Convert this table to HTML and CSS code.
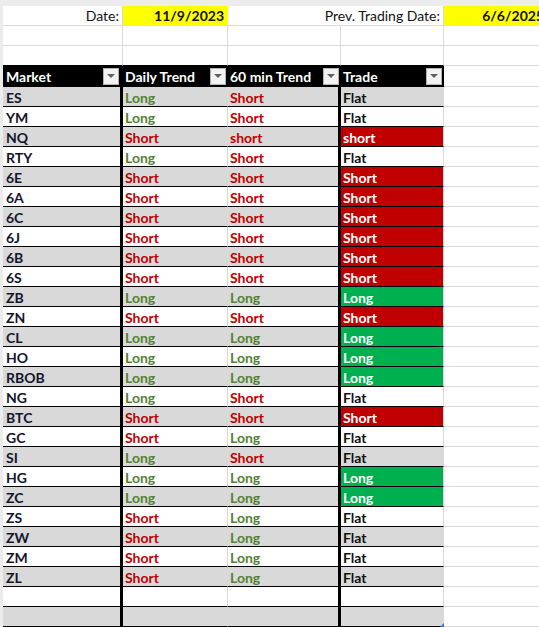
FILE: index.html
```html
<!DOCTYPE html>
<html>
<head>
<meta charset="utf-8">
<link rel="stylesheet" href="styles.css">
</head>
<body>
<div class="frame">
  <div class="sheet">
    <div class="row">
      <div class="c ra">Date:</div>
      <div class="c ra yellow b">11/9/2023</div>
      <div class="c nob"></div>
      <div class="c ra over">Prev. Trading Date:</div>
      <div class="c ra yellow b">6/6/2025</div>
    </div>
    <div class="row">
      <div class="c"></div><div class="c"></div><div class="c"></div><div class="c"></div><div class="c"></div>
    </div>
    <div class="row pre">
      <div class="c"></div><div class="c"></div><div class="c"></div><div class="c"></div><div class="c"></div>
    </div>
    <div class="row head">
      <div class="c h ta">Market<span class="filter"></span></div>
      <div class="c h">Daily Trend<span class="filter"></span></div>
      <div class="c h">60 min Trend<span class="filter"></span></div>
      <div class="c h">Trade<span class="filter"></span></div>
      <div class="c"></div>
    </div>
    <div class="row g"><div class="c t ta m">ES</div><div class="c t tb long">Long</div><div class="c t tc short">Short</div><div class="c t td">Flat</div><div class="c"></div></div>
    <div class="row"><div class="c t ta m">YM</div><div class="c t tb long">Long</div><div class="c t tc short">Short</div><div class="c t td">Flat</div><div class="c"></div></div>
    <div class="row g"><div class="c t ta m">NQ</div><div class="c t tb short">Short</div><div class="c t tc short">short</div><div class="c t td sred">short</div><div class="c"></div></div>
    <div class="row"><div class="c t ta m">RTY</div><div class="c t tb long">Long</div><div class="c t tc short">Short</div><div class="c t td">Flat</div><div class="c"></div></div>
    <div class="row g"><div class="c t ta m">6E</div><div class="c t tb short">Short</div><div class="c t tc short">Short</div><div class="c t td sred">Short</div><div class="c"></div></div>
    <div class="row"><div class="c t ta m">6A</div><div class="c t tb short">Short</div><div class="c t tc short">Short</div><div class="c t td sred">Short</div><div class="c"></div></div>
    <div class="row g"><div class="c t ta m">6C</div><div class="c t tb short">Short</div><div class="c t tc short">Short</div><div class="c t td sred">Short</div><div class="c"></div></div>
    <div class="row"><div class="c t ta m">6J</div><div class="c t tb short">Short</div><div class="c t tc short">Short</div><div class="c t td sred">Short</div><div class="c"></div></div>
    <div class="row g"><div class="c t ta m">6B</div><div class="c t tb short">Short</div><div class="c t tc short">Short</div><div class="c t td sred">Short</div><div class="c"></div></div>
    <div class="row"><div class="c t ta m">6S</div><div class="c t tb short">Short</div><div class="c t tc short">Short</div><div class="c t td sred">Short</div><div class="c"></div></div>
    <div class="row g"><div class="c t ta m">ZB</div><div class="c t tb long">Long</div><div class="c t tc long">Long</div><div class="c t td sgreen">Long</div><div class="c"></div></div>
    <div class="row"><div class="c t ta m">ZN</div><div class="c t tb short">Short</div><div class="c t tc short">Short</div><div class="c t td sred">Short</div><div class="c"></div></div>
    <div class="row g"><div class="c t ta m">CL</div><div class="c t tb long">Long</div><div class="c t tc long">Long</div><div class="c t td sgreen">Long</div><div class="c"></div></div>
    <div class="row"><div class="c t ta m">HO</div><div class="c t tb long">Long</div><div class="c t tc long">Long</div><div class="c t td sgreen">Long</div><div class="c"></div></div>
    <div class="row g"><div class="c t ta m">RBOB</div><div class="c t tb long">Long</div><div class="c t tc long">Long</div><div class="c t td sgreen">Long</div><div class="c"></div></div>
    <div class="row"><div class="c t ta m">NG</div><div class="c t tb long">Long</div><div class="c t tc short">Short</div><div class="c t td">Flat</div><div class="c"></div></div>
    <div class="row g"><div class="c t ta m">BTC</div><div class="c t tb short">Short</div><div class="c t tc short">Short</div><div class="c t td sred">Short</div><div class="c"></div></div>
    <div class="row"><div class="c t ta m">GC</div><div class="c t tb short">Short</div><div class="c t tc long">Long</div><div class="c t td">Flat</div><div class="c"></div></div>
    <div class="row g"><div class="c t ta m">SI</div><div class="c t tb long">Long</div><div class="c t tc short">Short</div><div class="c t td">Flat</div><div class="c"></div></div>
    <div class="row"><div class="c t ta m">HG</div><div class="c t tb long">Long</div><div class="c t tc long">Long</div><div class="c t td sgreen">Long</div><div class="c"></div></div>
    <div class="row g"><div class="c t ta m">ZC</div><div class="c t tb long">Long</div><div class="c t tc long">Long</div><div class="c t td sgreen">Long</div><div class="c"></div></div>
    <div class="row"><div class="c t ta m">ZS</div><div class="c t tb short">Short</div><div class="c t tc long">Long</div><div class="c t td">Flat</div><div class="c"></div></div>
    <div class="row g"><div class="c t ta m">ZW</div><div class="c t tb short">Short</div><div class="c t tc long">Long</div><div class="c t td">Flat</div><div class="c"></div></div>
    <div class="row"><div class="c t ta m">ZM</div><div class="c t tb short">Short</div><div class="c t tc long">Long</div><div class="c t td">Flat</div><div class="c"></div></div>
    <div class="row g"><div class="c t ta m">ZL</div><div class="c t tb short">Short</div><div class="c t tc long">Long</div><div class="c t td">Flat</div><div class="c"></div></div>
    <div class="row"><div class="c t ta"></div><div class="c t tb"></div><div class="c t tc"></div><div class="c t td"></div><div class="c"></div></div>
    <div class="row g"><div class="c t ta"></div><div class="c t tb"></div><div class="c t tc"></div><div class="c t td corner"></div><div class="c"></div></div>
  </div>
</div>
</body>
</html>
```
FILE: styles.css
```css
html, body {
  margin: 0;
  padding: 0;
  background: #ffffff;
  overflow: hidden;
}
.frame {
  padding-top: 6px;
  padding-left: 3px;
  background: #ececec;
  height: 627px;
  box-sizing: border-box;
}
.sheet {
  background: #ffffff;
  height: 100%;
  width: 560px;
}
.row {
  display: grid;
  grid-template-columns: 120px 105px 113px 103px 104px;
}
.c {
  box-sizing: border-box;
  height: 20px;
  line-height: 20px;
  padding: 0 2px;
  border-right: 1px solid #d9d9d9;
  border-bottom: 1px solid #d9d9d9;
  font-family: "Lato", "Liberation Sans", sans-serif;
  font-size: 14px;
  color: #111111;
  white-space: nowrap;
  overflow: hidden;
  background: #ffffff;
}
.ra { text-align: right; padding-right: 3px; }
.b { font-weight: 700; }
.yellow { background: #ffff00; border-color: #ffff00; }
.nob { border-right: none; }
.over {
  overflow: visible;
  display: flex;
  justify-content: flex-end;
}
.pre .c:nth-child(-n+4) { border-bottom-color: #000000; }
.head .c { height: 21px; }
.h {
  background: #000000;
  color: #ffffff;
  font-weight: 700;
  border-color: #000000;
  display: flex;
  align-items: center;
  justify-content: space-between;
  padding-right: 1px;
  padding-top: 1px;
}
.h.ta { border-right: 3px solid #000; }
.filter {
  width: 16px;
  height: 17px;
  box-sizing: border-box;
  border: 1px solid #b4b4b4;
  background: #f2f2f2;
  display: flex;
  align-items: center;
  justify-content: center;
  margin-top: -1px;
}
.filter::after {
  content: "";
  border-left: 4px solid transparent;
  border-right: 4px solid transparent;
  border-top: 4px solid #606060;
}
.t {
  border-bottom: 1px solid #000000;
  font-weight: 700;
  padding-top: 1px;
  line-height: 19px;
}
.ta { border-right: 3px solid #000000; padding-left: 3px; }
.tc { border-right: 3px solid #000000; }
.g .t { background: #d9d9d9; }
.g .tb { border-right-color: #d9d9d9; }
.m { color: #14142c; }
.long { color: #548235; }
.short { color: #c00000; }
.g .sred, .sred { background: #c00000; color: #ffffff; }
.g .sgreen, .sgreen { background: #00b050; color: #ffffff; }
.corner { position: relative; overflow: visible; }
.corner::after {
  content: "";
  position: absolute;
  right: -1px;
  bottom: -1px;
  border-left: 4px solid transparent;
  border-bottom: 4px solid #4472c4;
}
```
